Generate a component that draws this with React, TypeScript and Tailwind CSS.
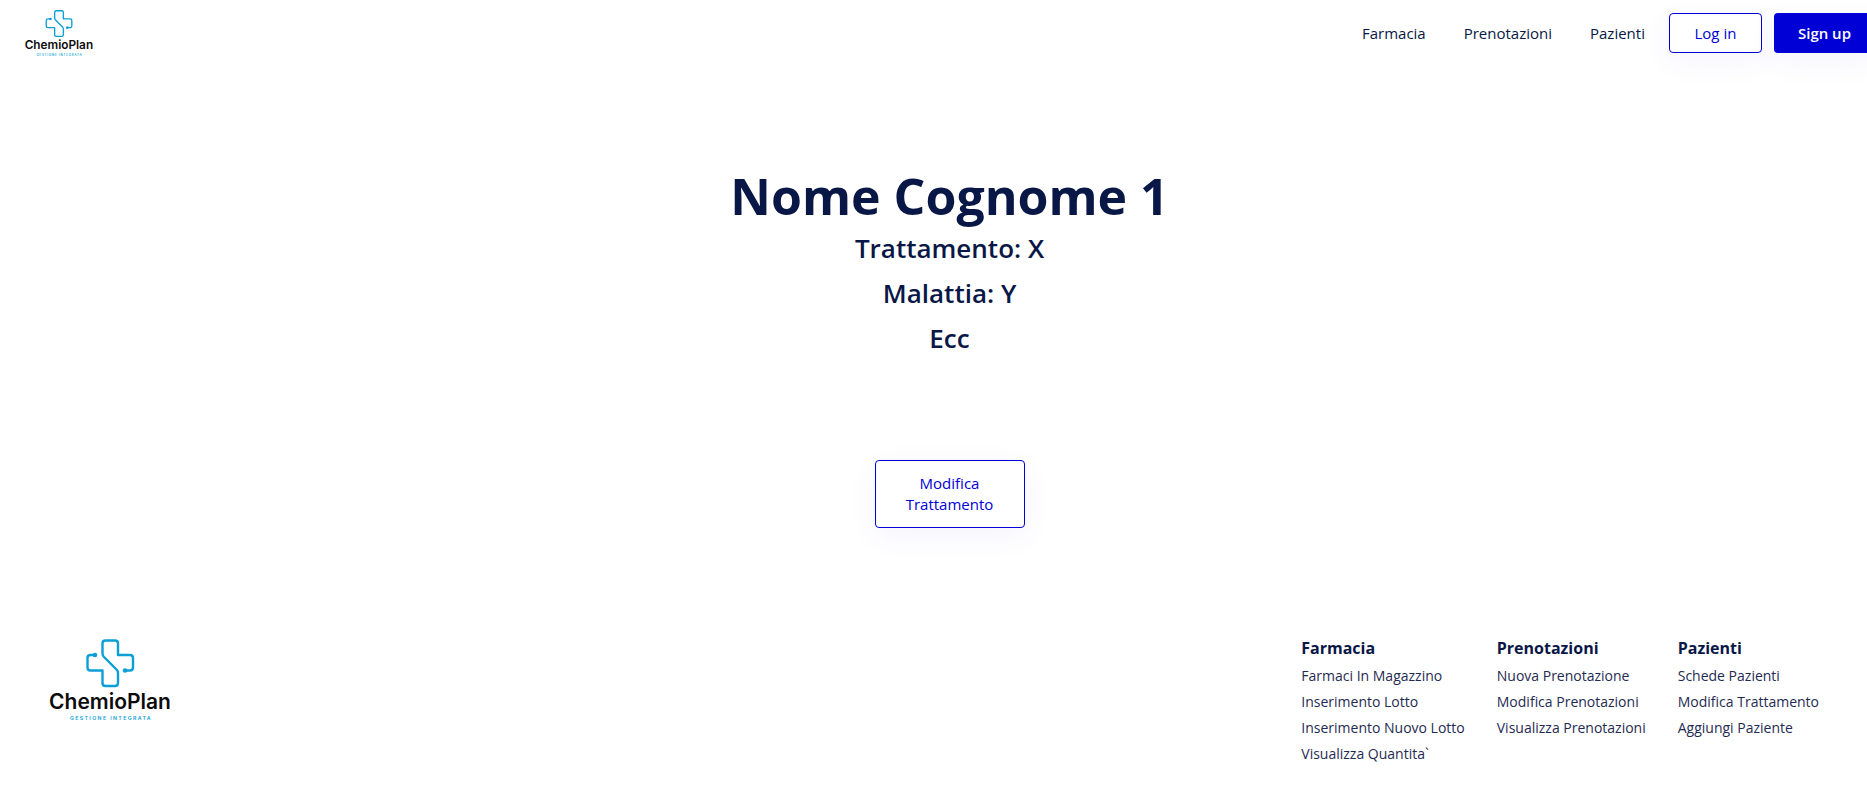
type LogoProps = { className: string };

function Logo({ className }: LogoProps) {
  return (
    <svg viewBox="0 0 128 86" className={className} role="img" aria-label="ChemioPlan Gestione Integrata">
      <g fill="none" stroke="#0a9fd6" strokeWidth="2.4" strokeLinecap="round" strokeLinejoin="round">
        <path d="M47 18H42.500Q39.500 18 39.500 21V30.500Q39.500 33.500 42.500 33.500H54.500V46Q54.500 49 57.500 49H67Q70 49 70 46V36Q70 34 68.500 32.500L56 20Q54.500 18.500 54.500 16.500V6.500Q54.500 3.500 57.500 3.500H67Q70 3.500 70 6.500V18H82Q85 18 85 21V30.500Q85 33.500 82 33.500H77" />
      </g>
      <circle cx="47" cy="18" r="2.300" fill="#0a9fd6" />
      <circle cx="77" cy="33.500" r="2.300" fill="#0a9fd6" />
      <text x="62" y="72" textAnchor="middle" fontSize="21" className="fill-[#0b0b0d] font-[Inter,sans-serif] font-semibold">
        ChemioPlan
      </text>
      <text x="63" y="83" textAnchor="middle" fontSize="5.2" letterSpacing="1.4" className="fill-[#0a9fd6] font-[Inter,sans-serif] font-semibold">
        GESTIONE INTEGRATA
      </text>
    </svg>
  );
}

const navigation = ["Farmacia", "Prenotazioni", "Pazienti"];

const details = ["Trattamento: X", "Malattia: Y", "Ecc"];

const footerColumns = [
  {
    title: "Farmacia",
    links: ["Farmaci In Magazzino", "Inserimento Lotto", "Inserimento Nuovo Lotto", "Visualizza Quantita`"],
  },
  {
    title: "Prenotazioni",
    links: ["Nuova Prenotazione", "Modifica Prenotazioni", "Visualizza Prenotazioni"],
  },
  {
    title: "Pazienti",
    links: ["Schede Pazienti", "Modifica Trattamento", "Aggiungi Paziente"],
  },
];

export default function App() {
  return (
    <div className="overflow-x-hidden bg-white font-['Open_Sans',sans-serif] text-[#091747]">
      <header className="-mr-8 flex items-center justify-between py-2 pr-6 pl-6">
        <a href="#">
          <Logo className="h-[50px] w-[72px]" />
        </a>
        <div className="flex items-center gap-6">
          <nav className="flex gap-[38px] text-[15px] leading-6">
            {navigation.map((label) => (
              <a key={label} href="#">
                {label}
              </a>
            ))}
          </nav>
          <div className="flex gap-3 text-[15px] leading-[22px]">
            <button className="min-w-[93px] rounded border border-[#0000d6] bg-white px-6 py-2 font-medium text-[#0000d6] shadow-[0_8px_30px_rgba(80,60,200,0.06)]">
              Log in
            </button>
            <button className="rounded bg-[#0000d6] px-6 py-2 font-semibold text-white shadow-[0_8px_30px_rgba(80,60,200,0.06)]">
              Sign up
            </button>
          </div>
        </div>
      </header>

      <main className="-mr-8 flex flex-col items-center pt-[100px] text-center">
        <h1 className="text-[50px] leading-[60px] font-bold">Nome Cognome 1</h1>
        {details.map((line) => (
          <h2 key={line} className="text-[26px] leading-[45px] font-semibold">
            {line}
          </h2>
        ))}
        <button className="mt-[99px] w-[150px] rounded border border-[#0000d6] bg-white px-6 py-3 text-[15px] leading-[21px] font-medium text-[#0000d6] shadow-[0_8px_30px_rgba(80,60,200,0.06)]">
          Modifica Trattamento
        </button>
      </main>

      <footer className="mt-[105px] flex items-start justify-between px-12 pb-6">
        <a href="#" className="mt-1">
          <Logo className="h-[86px] w-32" />
        </a>
        <div className="flex gap-8">
          {footerColumns.map(({ title, links }) => (
            <section key={title}>
              <h3 className="text-base leading-[30px] font-bold">{title}</h3>
              <ul className="text-sm leading-[26px] text-[#1f2b52]">
                {links.map((link) => (
                  <li key={link}>
                    <a href="#">{link}</a>
                  </li>
                ))}
              </ul>
            </section>
          ))}
        </div>
      </footer>
    </div>
  );
}
